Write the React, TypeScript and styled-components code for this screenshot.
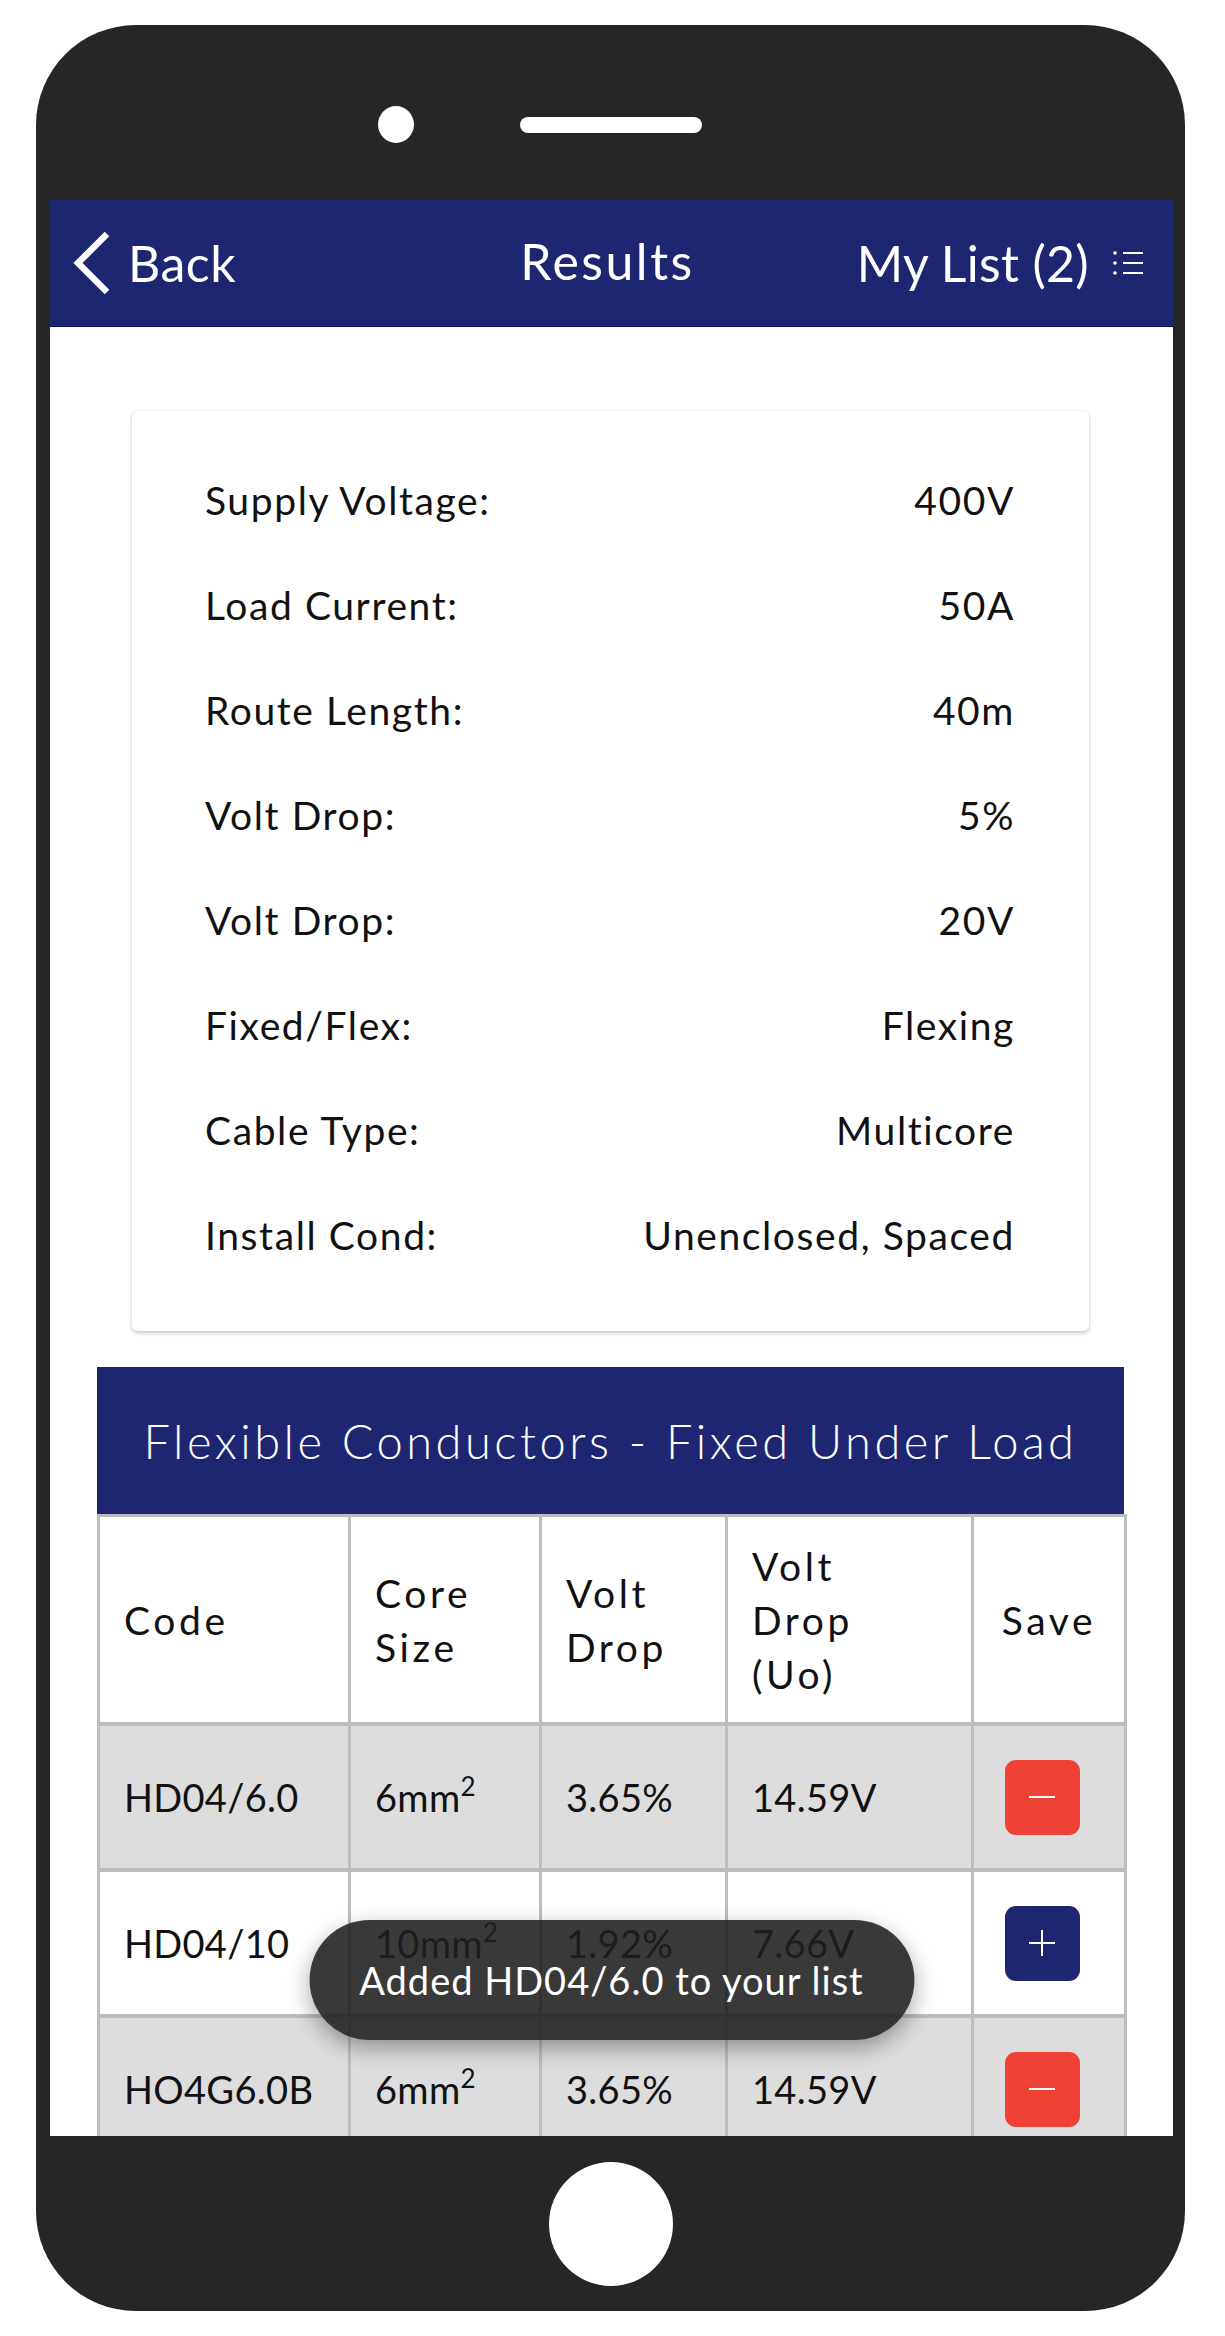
import React from "react";
import styled, { createGlobalStyle } from "styled-components";

const Global = createGlobalStyle`
  html, body { margin: 0; padding: 0; background: #ffffff; }
  body { font-family: "Lato", "Liberation Sans", sans-serif; color: #111; }
`;

const NAVY = "#1e2672";
const RED = "#ef4136";

const Page = styled.div`
  width: 1225px;
  height: 2336px;
  padding: 25px 0 0 36px;
  box-sizing: border-box;
`;

const Phone = styled.div`
  width: 1149px;
  height: 2286px;
  background: #262626;
  border-radius: 100px;
  display: flex;
  flex-direction: column;
  overflow: hidden;
`;

const TopBezel = styled.div`
  height: 175px;
  flex: none;
  box-sizing: border-box;
  padding: 24px 0 0 342px;
  display: flex;
  align-items: center;
  gap: 106px;
`;

const Camera = styled.div`
  width: 36px;
  height: 37px;
  border-radius: 50%;
  background: #fff;
`;

const Speaker = styled.div`
  width: 182px;
  height: 16px;
  border-radius: 8px;
  background: #fff;
`;

const Screen = styled.div`
  flex: none;
  height: 1936px;
  margin: 0 12px 0 14px;
  background: #fff;
  position: relative;
  overflow: hidden;
`;

const BottomBezel = styled.div`
  flex: 1;
  display: flex;
  align-items: center;
  justify-content: center;
`;

const HomeButton = styled.div`
  width: 124px;
  height: 124px;
  border-radius: 50%;
  background: #fff;
`;

const NavBar = styled.div`
  height: 127px;
  box-sizing: border-box;
  background: ${NAVY};
  border-bottom: 1px solid #121652;
  display: grid;
  grid-template-columns: 1fr auto 1fr;
  align-items: center;
  color: #fff;
  padding: 0 30px 0 22px;
`;

const NavLeft = styled.div`
  display: flex;
  align-items: center;
  gap: 16px;
  font-size: 50px;
  letter-spacing: 0.5px;
`;

const NavTitle = styled.div`
  font-size: 50px;
  font-weight: 400;
  letter-spacing: 2.5px;
  margin-top: -4px;
`;

const NavRight = styled.div`
  justify-self: end;
  display: flex;
  align-items: center;
  gap: 24px;
  font-size: 50px;
  letter-spacing: 0.3px;
`;

const Content = styled.div`
  padding: 84px 49px 0 47px;
`;

const Card = styled.div`
  margin: 0 35px 36px 35px;
  padding: 36px 74px 44px 73px;
  border-radius: 6px;
  background: #fff;
  box-shadow: 0 2px 4px rgba(0, 0, 0, 0.22), 0 0 2px rgba(0, 0, 0, 0.08);
`;

const InfoRow = styled.div`
  height: 105px;
  display: flex;
  align-items: center;
  justify-content: space-between;
  font-size: 39px;
  letter-spacing: 1.6px;
  color: #111;
`;

const Banner = styled.div`
  height: 147px;
  background: ${NAVY};
  color: #fff;
  font-size: 47px;
  font-weight: 300;
  letter-spacing: 3.5px;
  display: flex;
  align-items: center;
  justify-content: center;
`;

const Table = styled.table`
  width: 100%;
  border-collapse: collapse;
  table-layout: fixed;
`;

const HeadCell = styled.th<{ $center?: boolean }>`
  border: 3px solid #bdbdbd;
  height: 205px;
  padding: 0 ${(p) => (p.$center ? "10px" : "20px 0 24px")};
  font-size: 39px;
  font-weight: 400;
  letter-spacing: 3.6px;
  line-height: 54px;
  text-align: ${(p) => (p.$center ? "center" : "left")};
  vertical-align: middle;
  color: #111;
`;

const Row = styled.tr<{ $shaded: boolean }>`
  background: ${(p) => (p.$shaded ? "#dddddd" : "#ffffff")};
`;

const Cell = styled.td<{ $center?: boolean }>`
  border: 3px solid #bdbdbd;
  border-top-width: 4px;
  border-bottom-width: 4px;
  height: 142px;
  padding: 0 ${(p) => (p.$center ? "14px 0 0" : "24px")};
  font-size: 38px;
  letter-spacing: 0.3px;
  text-align: ${(p) => (p.$center ? "center" : "left")};
  vertical-align: middle;
  color: #111;
  white-space: nowrap;
`;

const Sup = styled.sup`
  font-size: 26px;
  line-height: 0;
  vertical-align: 16px;
`;

const SaveButton = styled.button<{ $saved: boolean }>`
  width: 75px;
  height: 75px;
  border: none;
  border-radius: 11px;
  background: ${(p) => (p.$saved ? RED : NAVY)};
  display: inline-flex;
  align-items: center;
  justify-content: center;
  padding: 0;
  vertical-align: middle;
`;

const Toast = styled.div`
  position: absolute;
  left: 50%;
  bottom: 96px;
  transform: translateX(-50%);
  width: 605px;
  height: 120px;
  border-radius: 60px;
  background: rgba(30, 30, 30, 0.88);
  box-shadow: 0 8px 22px rgba(0, 0, 0, 0.35);
  color: #fff;
  font-size: 38px;
  letter-spacing: 1px;
  display: flex;
  align-items: center;
  justify-content: center;
`;

const info: [string, string][] = [
  ["Supply Voltage:", "400V"],
  ["Load Current:", "50A"],
  ["Route Length:", "40m"],
  ["Volt Drop:", "5%"],
  ["Volt Drop:", "20V"],
  ["Fixed/Flex:", "Flexing"],
  ["Cable Type:", "Multicore"],
  ["Install Cond:", "Unenclosed, Spaced"],
];

const headers: { lines: string[]; center?: boolean }[] = [
  { lines: ["Code"] },
  { lines: ["Core", "Size"] },
  { lines: ["Volt", "Drop"] },
  { lines: ["Volt", "Drop", "(Uo)"] },
  { lines: ["Save"], center: true },
];

const rows = [
  { code: "HD04/6.0", size: "6", drop: "3.65%", uo: "14.59V", saved: true },
  { code: "HD04/10", size: "10", drop: "1.92%", uo: "7.66V", saved: false },
  { code: "HO4G6.0B", size: "6", drop: "3.65%", uo: "14.59V", saved: true },
];

const Chevron = () => (
  <svg width="40" height="64" viewBox="0 0 40 64">
    <path d="M35 3 L6 32 L35 61" fill="none" stroke="#fff" strokeWidth="6.5" strokeLinecap="butt" />
  </svg>
);

const ListIcon = () => (
  <svg width="30" height="26" viewBox="0 0 30 26">
    <circle cx="2" cy="3" r="1.8" fill="#fff" />
    <circle cx="2" cy="13" r="1.8" fill="#fff" />
    <circle cx="2" cy="23" r="1.8" fill="#fff" />
    <path d="M10 3 H30 M10 13 H30 M10 23 H30" stroke="#fff" strokeWidth="2" />
  </svg>
);

const SignIcon = ({ plus }: { plus: boolean }) => (
  <svg width="28" height="28" viewBox="0 0 28 28">
    <path d="M1 14 H27" stroke="#fff" strokeWidth="2" />
    {plus && <path d="M14 1 V27" stroke="#fff" strokeWidth="2" />}
  </svg>
);

export default function App() {
  return (
    <>
      <Global />
      <Page>
        <Phone>
          <TopBezel>
            <Camera />
            <Speaker />
          </TopBezel>
          <Screen>
            <NavBar>
              <NavLeft>
                <Chevron />
                <span>Back</span>
              </NavLeft>
              <NavTitle>Results</NavTitle>
              <NavRight>
                <span>My List (2)</span>
                <ListIcon />
              </NavRight>
            </NavBar>
            <Content>
              <Card>
                {info.map(([k, v], i) => (
                  <InfoRow key={i}>
                    <span>{k}</span>
                    <span>{v}</span>
                  </InfoRow>
                ))}
              </Card>
              <Banner>Flexible Conductors - Fixed Under Load</Banner>
              <Table>
                <colgroup>
                  <col style={{ width: 251 }} />
                  <col style={{ width: 191 }} />
                  <col style={{ width: 186 }} />
                  <col style={{ width: 246 }} />
                  <col style={{ width: 153 }} />
                </colgroup>
                <thead>
                  <tr>
                    {headers.map((h, i) => (
                      <HeadCell key={i} $center={h.center}>
                        {h.lines.map((l, j) => (
                          <React.Fragment key={j}>
                            {j > 0 && <br />}
                            {l}
                          </React.Fragment>
                        ))}
                      </HeadCell>
                    ))}
                  </tr>
                </thead>
                <tbody>
                  {rows.map((r, i) => (
                    <Row key={i} $shaded={i % 2 === 0}>
                      <Cell>{r.code}</Cell>
                      <Cell>
                        {r.size}mm<Sup>2</Sup>
                      </Cell>
                      <Cell>{r.drop}</Cell>
                      <Cell>{r.uo}</Cell>
                      <Cell $center>
                        <SaveButton $saved={r.saved} aria-label={r.saved ? "Remove" : "Add"}>
                          <SignIcon plus={!r.saved} />
                        </SaveButton>
                      </Cell>
                    </Row>
                  ))}
                </tbody>
              </Table>
            </Content>
            <Toast>Added HD04/6.0 to your list</Toast>
          </Screen>
          <BottomBezel>
            <HomeButton />
          </BottomBezel>
        </Phone>
      </Page>
    </>
  );
}
